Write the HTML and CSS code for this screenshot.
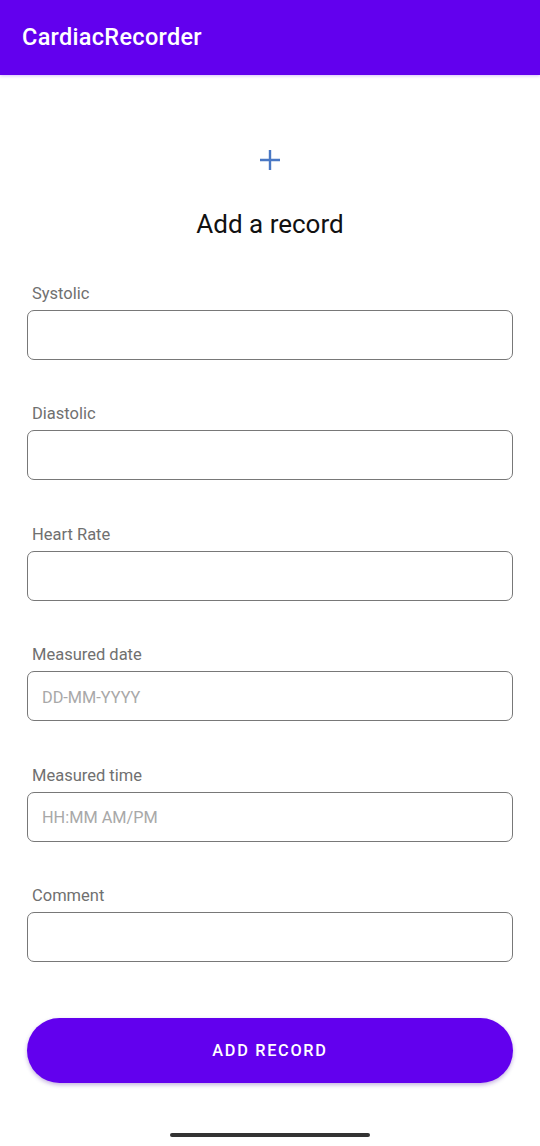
FILE: index.html
```html
<!DOCTYPE html>
<html>
<head>
<meta charset="utf-8">
<link rel="stylesheet" href="styles.css">
</head>
<body>
<header class="appbar"><span class="title">CardiacRecorder</span></header>
<main class="content">
  <div class="icon">
    <svg width="22" height="22" viewBox="0 0 22 22"><path d="M11 1V21M1 11H21" stroke="#4a78c4" stroke-width="2.4" fill="none"/></svg>
  </div>
  <h1 class="heading">Add a record</h1>
  <form class="form">
    <div class="field"><label class="label">Systolic</label><div class="input"></div></div>
    <div class="field"><label class="label">Diastolic</label><div class="input"></div></div>
    <div class="field"><label class="label">Heart Rate</label><div class="input"></div></div>
    <div class="field"><label class="label">Measured date</label><div class="input"><span class="ph">DD-MM-YYYY</span></div></div>
    <div class="field"><label class="label">Measured time</label><div class="input"><span class="ph">HH:MM AM/PM</span></div></div>
    <div class="field"><label class="label">Comment</label><div class="input"></div></div>
  </form>
  <div class="button">ADD RECORD</div>
  <div class="homebar-wrap"><div class="homebar"></div></div>
</main>
</body>
</html>
```
FILE: styles.css
```css
* { box-sizing: border-box; }
html, body { margin: 0; padding: 0; background: #fff; }
body { font-family: Roboto, "Noto Sans", sans-serif; width: 540px; height: 1146px; overflow: hidden; }
.appbar {
  height: 75px;
  background: #6200ee;
  display: flex;
  align-items: center;
  padding-left: 22px;
  padding-bottom: 2px;
  box-shadow: 0 1px 3px rgba(98,0,238,0.25);
}
.title { color: #fff; font-size: 23.5px; font-weight: 500; letter-spacing: 0.3px; }
.content { display: flex; flex-direction: column; padding: 0 27px; }
.icon { display: flex; justify-content: center; margin-top: 74px; height: 22px; }
.heading { margin: 38px 0 0; text-align: center; font-weight: 400; font-size: 26px; color: #111; line-height: 30px; }
.form { display: flex; flex-direction: column; margin-top: 44px; }
.field { display: flex; flex-direction: column; margin-bottom: 43.4px; }
.label { font-size: 16.5px; color: #707070; line-height: 20px; padding-left: 5px; height: 20px; margin-top: 1px; margin-bottom: 6px; }
.input {
  height: 50px;
  border: 1.3px solid #787878;
  border-radius: 7px;
  display: flex;
  align-items: center;
  padding-left: 14px;
}
.ph { font-size: 16.3px; color: #a8a8a8; padding-top: 2px; }
.button {
  margin-top: 13px;
  height: 65px;
  border-radius: 33px;
  background: #6200ee;
  color: #fff;
  display: flex;
  align-items: center;
  justify-content: center;
  font-size: 16.3px;
  font-weight: 500;
  letter-spacing: 1.7px;
  box-shadow: 0 2px 4px rgba(60,0,150,0.3);
}
.homebar-wrap { display: flex; justify-content: center; margin-top: 50px; }
.homebar { width: 200px; height: 4px; border-radius: 2px; background: #333; }
```
